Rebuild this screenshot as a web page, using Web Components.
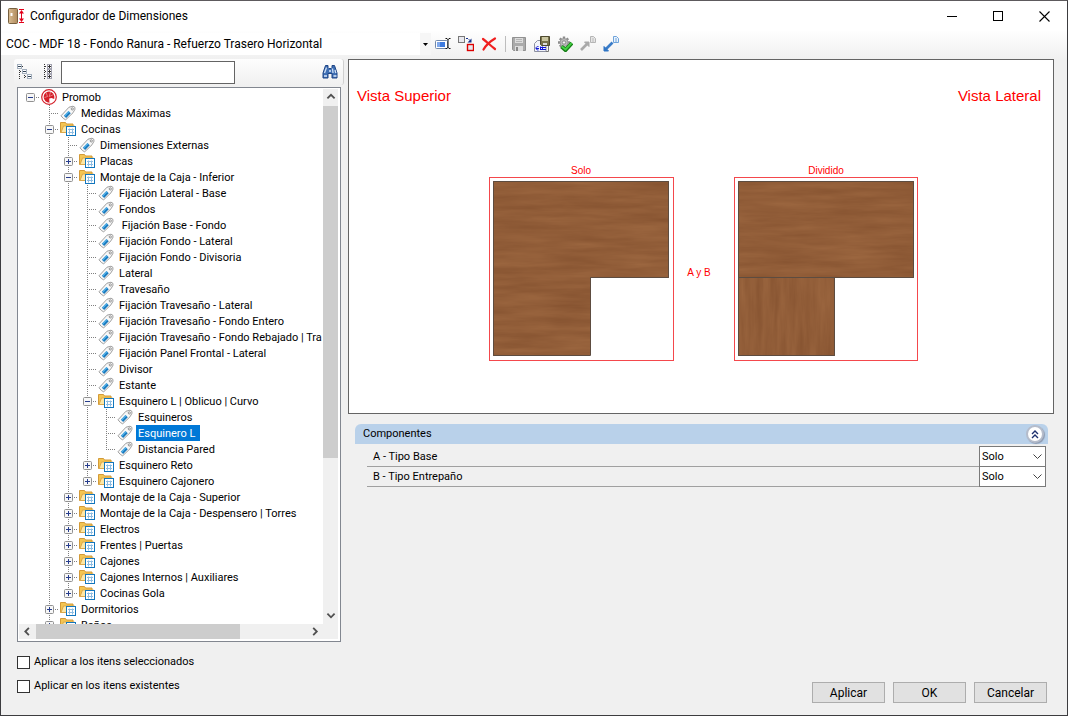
<!DOCTYPE html>
<html lang="es">
<head>
<meta charset="utf-8">
<title>Configurador de Dimensiones</title>
<style>
html,body{margin:0;height:100%}
body{font:11px/16px Roboto,"Liberation Sans",sans-serif;color:#000;background:#f0f0f0}
</style>
</head>
<body>
<config-window></config-window>
<script>
const ICONS={
app:`<defs><linearGradient id="d" x2="1"><stop stop-color="#d9bd93"/><stop offset="1" stop-color="#b08a5c"/></linearGradient></defs><rect x=".5" y=".5" width="9" height="15" rx="1" fill="url(#d)" stroke="#77603f"/><path d="M3.5 5v3" stroke="#fff" stroke-width="2"/><path d="M11 1.500h5M11 14.500h5M13.500 3v10" stroke="#e2001a" fill="none"/><path d="M13.500 2l2.500 3.500h-5zM13.500 14l2.500-3.500h-5z" fill="#e2001a"/>`,
rename:`<rect x=".5" y="4.500" width="12" height="8" rx="1" fill="#fff" stroke="#7289ab"/><rect x="2" y="6" width="8" height="5" fill="#3d7be0"/><rect x="2" y="6" width="3" height="5" fill="#7fa8ec"/><path d="M10.500 2.500h1.500l1 1 1-1h1.500M13 3v9M10.500 12.500h1.500l1-1 1 1h1.500" stroke="#111" fill="none"/>`,
replace:`<rect x=".5" y=".5" width="6" height="6" fill="#e9e9ef" stroke="#777"/><rect x="9.500" y="8.500" width="6" height="6" fill="#e6e8ee" stroke="#d00" stroke-width="1.400"/><path d="M8 2.500h2l2.500 2.500" stroke="#15308c" fill="none" stroke-dasharray="2 1"/><path d="M13.500 2.500v4h-4z" fill="#15308c"/>`,
del:`<path d="M2 3c4 3 8 7 12 10M14 2.500C9 5.500 5 9 2.500 13.500" stroke="#f02020" stroke-width="2.200" fill="none" stroke-linecap="round"/>`,
save:`<path d="M1.500 1.500h13v13h-12l-1-1z" fill="#aaa" stroke="#919191"/><rect x="4" y="2" width="8" height="5" fill="#dcdcdc"/><path d="M5 3.500h6M5 5.500h6" stroke="#b5b5b5"/><rect x="4" y="10" width="8" height="5" fill="#ddd"/><rect x="5" y="11" width="2" height="4" fill="#888"/>`,
saveas:`<path d="M3.500 4.500h8.500v11H.5v-8z" fill="#f2f4fa" stroke="#8c90a0"/><path d="M14.500 10v5.500H12" stroke="#777" fill="none"/><path d="M6.500 .5h9v9h-8l-1-1z" fill="#77714a" stroke="#4e4a30"/><rect x="8" y="1" width="6" height="4" fill="#c9c5a0"/><rect x="9" y="7" width="4" height="2" fill="#ddd"/><path d="M4.500 10.500c-1.700 0-2.500.7-2.500 1.700s.8 1.800 2.500 1.800M2 12.500h3M6.500 10.500v3.500M8.500 10.500v3.500M6 11.500h6M6 13.500h6" stroke="#1016d8" fill="none"/>`,
gear:`<g stroke="#8c8c8c" stroke-width="2.400"><path d="M7 .5v12M1 6.500h12M2.800 2.300l8.400 8.400M11.200 2.300l-8.400 8.400"/></g><circle cx="7" cy="6.500" r="4" fill="#bcbcbc" stroke="#999"/><circle cx="7" cy="6.500" r="1.700" fill="#f4f4f4" stroke="#888"/><path d="M4.500 10.500l4 3.500 6.500-7" stroke="#147d14" stroke-width="4" fill="none"/><path d="M4.800 10.500l3.700 3 6-6.400" stroke="#43cf43" stroke-width="2" fill="none"/>`,
expo:`<path d="M1 14l6-6" stroke="#aaa" stroke-width="2.600"/><path d="M4.500 6h4.500v4.500z" fill="#aaa" stroke="#aaa"/><path d="M10.500 .5h3l2 2v4h-5z" fill="#e6e6e6" stroke="#b5b5b5"/><path d="M12 3h2M12 5h2" stroke="#bbb"/>`,
impo:`<path d="M3 13l6.500-6.500" stroke="#3a7cc8" stroke-width="2.600"/><path d="M1 10.500v4.500h4.500z" fill="#2f74c4" stroke="#2f74c4"/><path d="M10.500 .5h3l2 2v4h-5z" fill="#eaf3fd" stroke="#6ea3da"/><path d="M12 3h2M12 5h2" stroke="#6ea3da"/>`,
collapse:`<g fill="#fff" stroke="#a3afbd"><rect x=".5" y=".5" width="4" height="4"/><rect x="5.500" y="5.500" width="4" height="4"/><rect x="10.500" y="10.500" width="4" height="4"/></g><path d="M1 2.500h3M6 7.500h3M11 12.500h3" stroke="#345"/><path d="M2.500 6v10M7.500 11v4M3 7.500h2M8 12.500h2M5 2.500h2" stroke="#333" stroke-dasharray="1 1"/>`,
expand:`<path d="M4.500 0v16M5 2.500h3M5 7.500h3M5 12.500h3" stroke="#333" stroke-dasharray="1 1"/><g fill="#fff" stroke="#a3a3b0"><rect x="7.500" y=".5" width="4" height="4"/><rect x="7.500" y="5.500" width="4" height="4"/><rect x="7.500" y="10.500" width="4" height="4"/></g><path d="M8 2.500h3M9.500 1v3M8 7.500h3M9.500 6v3M8 12.500h3M9.500 11v3" stroke="#333"/>`,
find:`<path d="M3.500 1.500h2.500v2l1 1h2l1-1v-2h2.500l2.500 7.500v5h-5v-4.500h-4V14h-5V9z" fill="#3f6fb4" stroke="#1f4585"/><path d="M4.500 3.500L2.500 9M10.500 4.500l.5 4.500M13 6l.8 3" stroke="#cfe0f7" stroke-width="1.300"/><path d="M2 12h3M11.500 12h3M7 7h2" stroke="#dce9fa" stroke-width="1.500"/>`,
promob:`<circle cx="8" cy="8" r="7.300" fill="#fff" stroke="#d4202a" stroke-width="1.200"/><path d="M8 2.500a5.600 5.600 0 1 0 .5 11.200L8.200 9.500l2.300-.5 2.700 1c1-4-1.500-7.200-5.200-7.500z" fill="#d4202a"/><path d="M5 3.500l1.500 4-3 1M9.500 3l-1.300 4.500 4.500-2" stroke="#f7b8b8" stroke-width=".6" fill="none"/>`,
tag:`<path d="M1 10.800L9 2.200l4-1 1.800 1 .2 2-2 3.600-7.300 7-2.200-1.200z" fill="#f8f8f8" stroke="#949494" stroke-width=".9"/><path d="M5 11.800l4.600-4.700" stroke="#1878bd" stroke-width="3.200"/><path d="M4.700 11l4.300-4.500" stroke="#56b4ea" stroke-width="1.200"/><circle cx="12.300" cy="3.900" r="1.100" fill="#fff" stroke="#777" stroke-width=".8"/>`,
folder:`<path d="M.5 11.500V1.500h5l1 1.500h6.500v8.500z" fill="#f4c552" stroke="#d39a38"/><path d="M1 11.500l2.500-6.500h11L12 11.500z" fill="#fde7a6" stroke="#dba94c"/><rect x="6.500" y="5.500" width="9" height="9" fill="#fff" stroke="#1276bd"/><path d="M8 8.500h6M8 11.500h6M9.500 7.500v6M12.500 7.500v6" stroke="#8dbde2"/>`,
plus:`<rect x=".5" y=".5" width="8" height="8" rx="1" fill="#f7f7f7" stroke="#919191"/><path d="M2 4.500h5M4.500 2v5" stroke="#263c8c"/>`,
minus:`<rect x=".5" y=".5" width="8" height="8" rx="1" fill="#f7f7f7" stroke="#919191"/><path d="M2 4.500h5" stroke="#263c8c"/>`
};
const icon=(n,s=16)=>`<svg class="i-${n}" width="${s}" height="${s}" viewBox="0 0 ${s} ${s}" fill="none" aria-hidden="true">${ICONS[n]}</svg>`;
const BASE=`:host,*{box-sizing:border-box}svg{display:block}button{border:0;background:none;padding:0;font:inherit;color:inherit}`;
function define(name,html,setup){
  customElements.define(name,class extends HTMLElement{
    connectedCallback(){
      if(this.shadowRoot)return;
      this.attachShadow({mode:'open'}).innerHTML=typeof html==='function'?html(this):html;
      if(setup)setup(this);
    }
  });
}

define('title-bar',`<style>${BASE}
:host{display:flex;height:30px;flex:none;background:#fff;align-items:center;padding-left:7px;font-size:12px}
span{flex:1;padding-left:5px}
button{width:46px;height:28px;display:grid;place-items:center}
</style>${icon('app',17)}<span><slot></slot></span>
<button aria-label="Minimizar"><svg width="10" height="10"><path d="M0 5.500h10" stroke="#000"/></svg></button>
<button aria-label="Maximizar"><svg width="10" height="10"><rect x=".5" y=".5" width="9" height="9" fill="none" stroke="#000"/></svg></button>
<button aria-label="Cerrar"><svg width="11" height="11"><path d="M.5.5l10 10M10.500.5l-10 10" stroke="#000" stroke-width="1.100"/></svg></button>`);

define('tool-button',el=>`<style>${BASE}
:host{display:block}
button{width:23px;height:23px;display:grid;place-items:center start;padding-left:3px}
</style><button title="${el.title}" aria-label="${el.title}">${icon(el.getAttribute('icon'))}</button>`);

define('main-toolbar',`<style>${BASE}
:host{display:flex;height:28px;flex:none;align-items:center;padding-bottom:2px;background:linear-gradient(#fefefe,#f0f0f0)}
select{appearance:none;border:0;outline:0;margin:0;width:430px;height:22px;padding:0 0 0 5px;font:12px/16px Roboto,"Liberation Sans",sans-serif;color:#000;
background:#fff linear-gradient(90deg,#f6f6f6,#f6f6f6) right/11px 100% no-repeat;border-radius:0}
.combo{display:grid;margin-right:1px}.combo>*{grid-area:1/1}.combo svg{place-self:center end;margin-right:3px;pointer-events:none}
.sep{width:1px;height:16px;background:#bdbdbd;margin:0 2px 0 4px}
</style>
<div class="combo"><select aria-label="Configuración"><option>COC - MDF 18 - Fondo Ranura - Refuerzo Trasero Horizontal</option></select><svg width="5" height="3"><path d="M0 0h5L2.500 3z"/></svg></div>
<tool-button icon="rename" title="Renombrar"></tool-button><tool-button icon="replace" title="Reemplazar"></tool-button><tool-button icon="del" title="Eliminar"></tool-button>
<div class="sep"></div>
<tool-button icon="save" title="Guardar"></tool-button><tool-button icon="saveas" title="Guardar como"></tool-button><tool-button icon="gear" title="Validar"></tool-button><tool-button icon="expo" title="Exportar"></tool-button><tool-button icon="impo" title="Importar"></tool-button>`);

define('search-bar',`<style>${BASE}
:host{display:flex;height:26px;flex:none;align-items:center;background:linear-gradient(#fdfdfd,#f0f0f0);border-right:1px solid #d0d0d0;border-radius:3px}
input{width:174px;height:23px;border:1px solid #646464;background:#fff;margin:0 auto 0 1px;padding:0 4px;font:inherit;outline:0;border-radius:0}
tool-button:last-child{margin-right:1px}
</style><tool-button icon="collapse" title="Contraer"></tool-button><tool-button icon="expand" title="Expandir"></tool-button><input type="text" aria-label="Buscar"><tool-button icon="find" title="Buscar"></tool-button>`);

define('scroll-bar',el=>{
  const v=el.getAttribute('axis')==='y',[t,r]=el.getAttribute('thumb').split(' ');
  const a=v?['M1 6l4-4 4 4','M1 3l4 4 4-4']:['M6 1L2 5l4 4','M3 1l4 4-4 4'];
  const b=(d,l)=>`<button aria-label="${l}"><svg width="10" height="9" viewBox="0 0 10 10" fill="none"><path d="${d}" stroke="#505050" stroke-width="2"/></svg></button>`;
  return `<style>${BASE}
:host{display:flex;flex-direction:${v?'column':'row'};background:#f0f0f0}
button{flex:0 0 17px;display:grid;place-items:center}
i{flex:${t} 0 0;background:#cdcdcd}u{flex:${r} 0 0}
</style>${b(a[0],v?'Arriba':'Izquierda')}<i></i><u></u>${b(a[1],v?'Abajo':'Derecha')}`;
});

/* [level, icon, label, expander, selected] */
const TREE=[
[0,'promob','Promob','minus'],[1,'tag','Medidas Máximas'],[1,'folder','Cocinas','minus'],[2,'tag','Dimensiones Externas'],[2,'folder','Placas','plus'],
[2,'folder','Montaje de la Caja - Inferior','minus'],[3,'tag','Fijación Lateral - Base'],[3,'tag','Fondos'],[3,'tag',' Fijación Base - Fondo'],[3,'tag','Fijación Fondo - Lateral'],
[3,'tag','Fijación Fondo - Divisoria'],[3,'tag','Lateral'],[3,'tag','Travesaño'],[3,'tag','Fijación Travesaño - Lateral'],[3,'tag','Fijación Travesaño - Fondo Entero'],
[3,'tag','Fijación Travesaño - Fondo Rebajado | Tra'],[3,'tag','Fijación Panel Frontal - Lateral'],[3,'tag','Divisor'],[3,'tag','Estante'],
[3,'folder','Esquinero L | Oblicuo | Curvo','minus'],[4,'tag','Esquineros'],[4,'tag','Esquinero L','','sel'],[4,'tag','Distancia Pared'],
[3,'folder','Esquinero Reto','plus'],[3,'folder','Esquinero Cajonero','plus'],[2,'folder','Montaje de la Caja - Superior','plus'],[2,'folder','Montaje de la Caja - Despensero | Torres','plus'],
[2,'folder','Electros','plus'],[2,'folder','Frentes | Puertas','plus'],[2,'folder','Cajones','plus'],[2,'folder','Cajones Internos | Auxiliares','plus'],[2,'folder','Cocinas Gola','plus'],
[1,'folder','Dormitorios','plus'],[1,'folder','Baños','plus']];
function continues(i,level){
  for(let j=i+1;j<TREE.length;j++){if(TREE[j][0]===level)return true;if(TREE[j][0]<level)return false}
  return false;
}
define('tree-view',()=>{
  const rows=TREE.map(([lv,ic,text,ex,sel],i)=>{
    let g='';
    for(let k=0;k<lv;k++)g+=`<span class="g${continues(i,k)?' v':''}"></span>`;
    g+=`<span class="g h${lv?(continues(i,lv)?' v':' t'):''}">${ex?icon(ex,9):''}</span>`;
    return `<div class="row" role="treeitem" aria-level="${lv+1}">${g}${icon(ic)}<span class="label${sel?' sel':''}">${text}</span></div>`;
  }).join('');
  return `<style>${BASE}
:host{display:grid;grid-template:minmax(0,1fr) 15px/minmax(0,1fr) 15px;flex:1 1 0;min-height:0;background:#fff;border:1px solid #828790;padding:1px 2px 2px 1px}
.view{overflow:hidden;padding-left:2px}
.row{display:flex;height:16px;white-space:pre}
.row>svg{flex:none;margin:0 3px 0 1px}
.g{--y:repeating-linear-gradient(#808080 0 1px,transparent 1px 2px);--x:repeating-linear-gradient(90deg,#808080 0 1px,transparent 1px 2px);
flex:0 0 19px;height:16px;padding:4px 0 0 5px;background-repeat:no-repeat}
.v{background-image:var(--y);background-size:1px 16px;background-position:9px 0}
.h{background-image:var(--x);background-size:10px 1px;background-position:9px 8px}
.h.v,.h.t{background-image:var(--x),var(--y);background-position:9px 8px,9px 0}
.h.v{background-size:10px 1px,1px 16px}.h.t{background-size:10px 1px,1px 8px}
.label{height:16px;padding:0 2px;line-height:18px}
.sel{background:#0078d7;color:#fff;padding-right:5px}
.corner{background:#f0f0f0}
</style><div class="view" role="tree">${rows}</div><scroll-bar axis="y" thumb="351 149"></scroll-bar><scroll-bar axis="x" thumb="204 66"></scroll-bar><span class="corner"></span>`;
});

define('check-option',el=>`<style>${BASE}
:host{display:block}
label{display:flex;height:16px;align-items:center;gap:4px}
input{appearance:none;width:13px;height:13px;margin:0;border:1px solid #333;background:#fff}
input:checked{background:#333}
</style><label><input type="checkbox"><span>${el.getAttribute('label')}</span></label>`);

define('view-preview',`<style>${BASE}
:host{display:block;border:1px solid #646464;background:#fff}
svg{width:100%;height:auto}
text{font-family:"Liberation Sans",Arial,sans-serif;font-size:10px;fill:#f00}
.big{font-size:15px}.mid{text-anchor:middle}
.frame{fill:none;stroke:#f4474c}
.edge{fill:none;stroke:#5d4c40}
</style>
<svg viewBox="0 0 704 353" role="img" aria-label="Vista superior de la base">
<defs>
<filter id="wh" x="0" y="0" width="1" height="1" color-interpolation-filters="sRGB"><feTurbulence type="fractalNoise" baseFrequency=".015 .14" numOctaves="4" seed="8"/><feColorMatrix values=".1 0 0 0 .52  .09 0 0 0 .32  .07 0 0 0 .185  0 0 0 0 1"/><feComposite in2="SourceGraphic" operator="in"/></filter>
<filter id="wv" x="0" y="0" width="1" height="1" color-interpolation-filters="sRGB"><feTurbulence type="fractalNoise" baseFrequency=".14 .015" numOctaves="4" seed="5"/><feColorMatrix values=".1 0 0 0 .52  .09 0 0 0 .32  .07 0 0 0 .185  0 0 0 0 1"/><feComposite in2="SourceGraphic" operator="in"/></filter>
</defs>
<text class="big" x="8" y="41">Vista Superior</text>
<text class="big" x="692" y="41" text-anchor="end">Vista Lateral</text>
<text class="mid" x="232" y="114">Solo</text>
<text class="mid" x="477" y="114">Dividido</text>
<text class="mid" x="350" y="216">A y B</text>
<rect class="frame" x="140.500" y="117.500" width="184" height="183"/>
<path filter="url(#wh)" d="M144 121h176v97h-79v78h-97z"/>
<path class="edge" d="M144.500 121.500h175v96h-78v78h-97z"/>
<rect class="frame" x="385.500" y="117.500" width="183" height="183"/>
<path filter="url(#wh)" d="M389 121h176v97H389z"/>
<path filter="url(#wv)" d="M389 217h97v79h-97z"/>
<path class="edge" d="M389.500 121.500h175v96h-175zM389.500 217.500h96v78h-96z"/>
</svg>`);

define('property-group',el=>`<style>${BASE}
:host{display:block}
header{display:flex;height:20px;align-items:center;background:#b9d1ea;border-radius:6px 6px 0 0;padding:0 4px 0 8px;justify-content:space-between}
button{width:18px;height:18px;border-radius:50%;background:#fff;border:2px solid #b5bccb;display:grid;place-items:center;box-shadow:1px 1px 1px #8d9ab0}
.body{padding:2px 2px 0 12px}
</style><header><span>${el.getAttribute('label')}</span><button aria-label="Contraer grupo"><svg width="8" height="9" viewBox="0 0 8 9" fill="none"><path d="M1 4l3-3 3 3M1 8l3-3 3 3" stroke="#1c2f6e" stroke-width="1.400"/></svg></button></header><div class="body"><slot></slot></div>`);

define('property-row',el=>`<style>${BASE}
:host{display:flex;height:21px}
:host(:not(:first-child)){margin-top:-1px}
label{flex:1;border-bottom:1px solid #a0a0a0;padding-left:6px;line-height:22px}
.combo{display:grid}.combo>*{grid-area:1/1}.combo svg{place-self:center end;margin-right:4px;pointer-events:none}
select{appearance:none;width:67px;height:21px;margin:0;padding:0 0 0 2px;border:1px solid #7a7a7a;border-radius:0;background:#fff;font:inherit;color:#000}
</style><label for="v">${el.getAttribute('label')}</label><div class="combo"><select id="v"><option>Solo</option><option>Dividido</option></select><svg width="9" height="6" fill="none"><path d="M.5.5l4 4 4-4" stroke="#444"/></svg></div>`);

define('dialog-button',`<style>${BASE}
:host{display:block}
button{width:73px;height:21px;background:#e1e1e1;border:1px solid #adadad;font-size:12px;line-height:16px}
</style><button><slot></slot></button>`);

define('config-window',`<style>${BASE}
:host{display:flex;flex-direction:column;height:100vh;min-height:600px;border:1px solid #3c3c3f;border-top-color:#5d5a5d;background:#f0f0f0;overflow:hidden}
main{display:flex;flex:1;min-height:0}
.left{display:flex;flex-direction:column;width:343px;flex:none;padding-left:13px}
.left tree-view{margin:2px 3px 0}
.options{display:grid;gap:8px;padding:12px 3px 21px}
.right{display:flex;flex-direction:column;flex:1;min-width:0;margin-left:4px;padding-right:13px}
property-group{margin:10px 6px 0 7px}
.actions{display:flex;justify-content:flex-end;gap:8px;margin-top:auto;padding:0 7px 12px 0}
</style>
<title-bar>Configurador de Dimensiones</title-bar>
<main-toolbar></main-toolbar>
<main>
<section class="left"><search-bar></search-bar><tree-view></tree-view>
<div class="options"><check-option label="Aplicar a los itens seleccionados"></check-option><check-option label="Aplicar en los itens existentes"></check-option></div></section>
<section class="right"><view-preview></view-preview>
<property-group label="Componentes"><property-row label="A - Tipo Base"></property-row><property-row label="B - Tipo Entrepaño"></property-row></property-group>
<div class="actions"><dialog-button>Aplicar</dialog-button><dialog-button>OK</dialog-button><dialog-button>Cancelar</dialog-button></div></section>
</main>`);
</script>
</body>
</html>
